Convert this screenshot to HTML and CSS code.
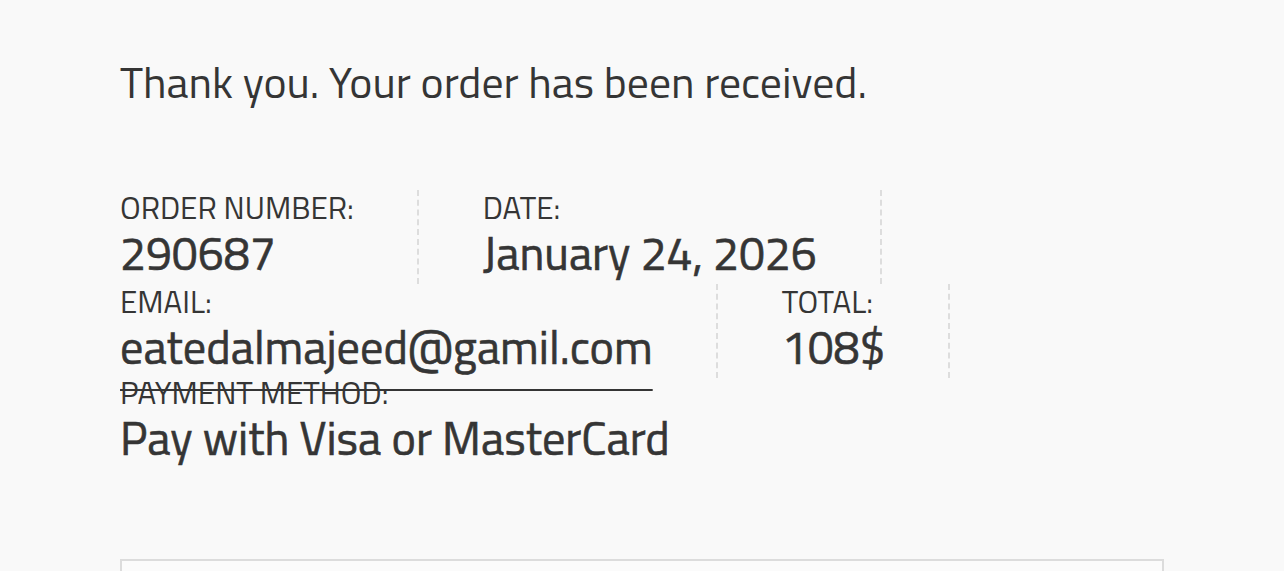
FILE: index.html
```html
<!DOCTYPE html>
<html lang="en">
<head>
<meta charset="utf-8">
<title>Order received</title>
<link rel="stylesheet" href="styles.css">
</head>
<body>
<main class="page">
  <p class="thanks">Thank you. Your order has been received.</p>
  <ul class="overview">
    <li class="overview-item">Order number:<strong class="value">290687</strong></li>
    <li class="overview-item">Date:<strong class="value">January 24, 2026</strong></li>
    <li class="overview-item">Email:<strong class="value value-email">eatedalmajeed@gamil.com</strong></li>
    <li class="overview-item">Total:<strong class="value">108$</strong></li>
    <li class="overview-item overview-last">Payment method:<strong class="value">Pay with Visa or MasterCard</strong></li>
  </ul>
  <section class="details"></section>
</main>
</body>
</html>
```
FILE: styles.css
```css
html, body {
  margin: 0;
  padding: 0;
  background: #f9f9f9;
}
body {
  font-family: "Titillium Web", "Roboto", "Liberation Sans", sans-serif;
  color: #353535;
}
.page {
  width: 1044px;
  padding: 0 0 0 120px;
}
.thanks {
  margin: 49px 0 0;
  font-size: 43.8px;
  line-height: 66px;
  font-weight: 400;
}
.overview {
  list-style: none;
  margin: 75px 0 0;
  padding: 0;
  display: flex;
  flex-wrap: wrap;
  align-items: flex-start;
}
.overview-item {
  box-sizing: border-box;
  height: 94px;
  padding-right: 63px;
  margin-right: 64px;
  border-right: 2px dashed #dddddd;
  font-size: 31.3px;
  line-height: 36px;
  text-transform: uppercase;
}
.overview-last {
  border-right: 0;
  margin-top: -3px;
}
.value {
  display: block;
  font-size: 46.3px;
  line-height: 55px;
  font-weight: 400;
  text-transform: none;
  -webkit-text-stroke: 0.6px currentColor;
}
.value-email {
  text-decoration: underline;
  text-decoration-thickness: 2px;
  text-underline-offset: 25px;
}
.details {
  margin-top: 90px;
  height: 40px;
  border: 2px solid #dcdcdc;
  border-bottom: 0;
  background: #fbfbfb;
}
```
